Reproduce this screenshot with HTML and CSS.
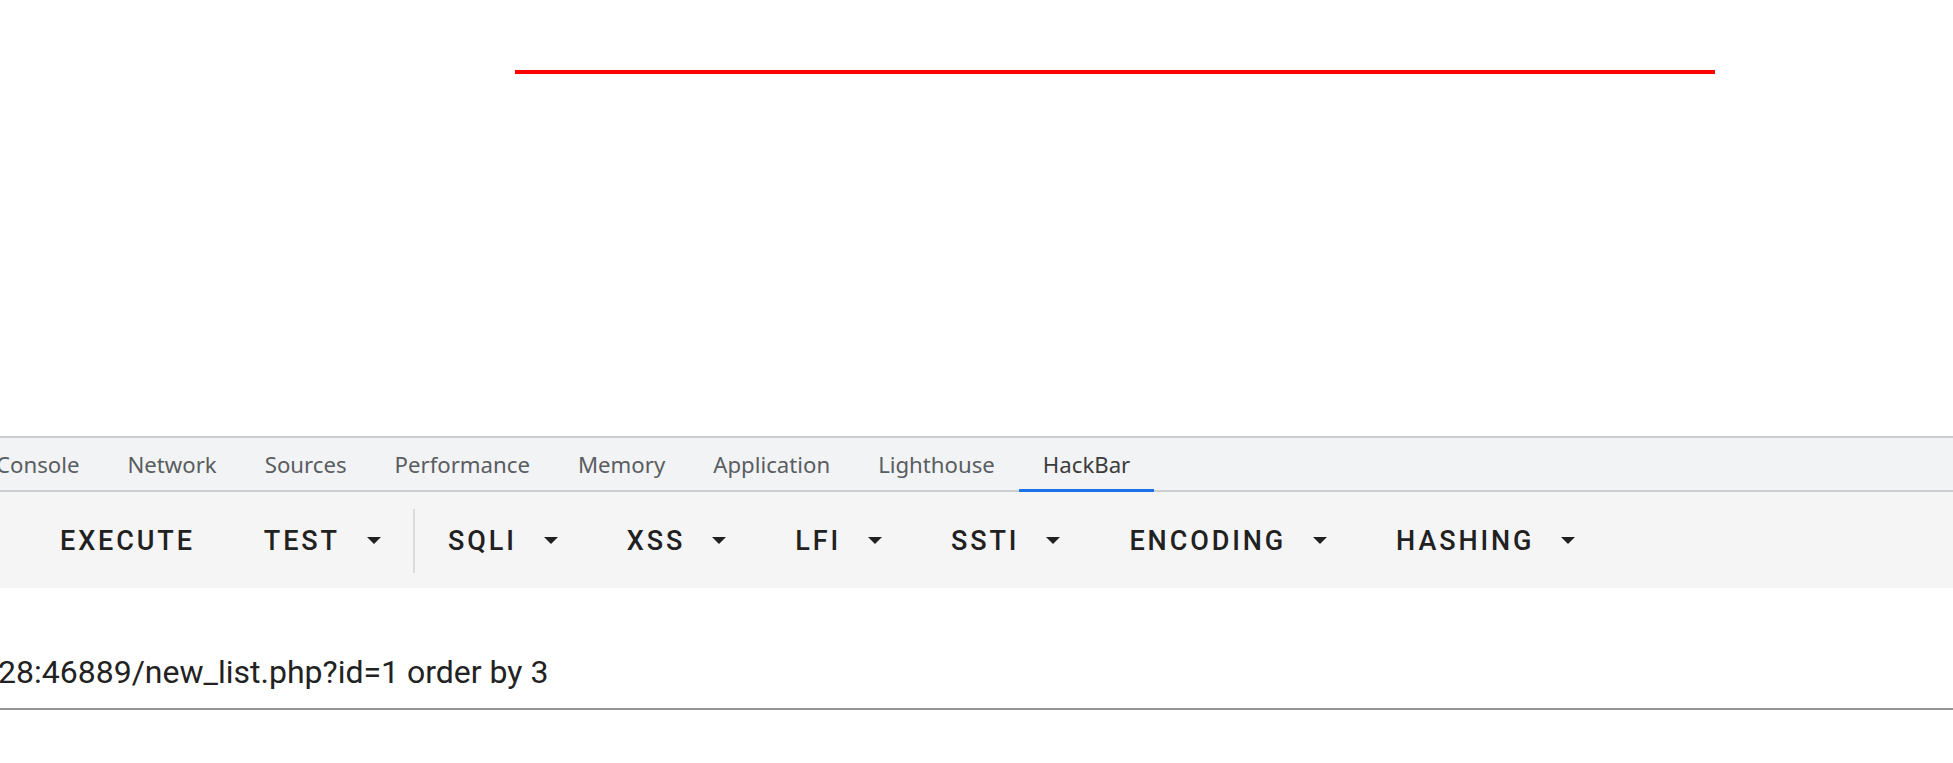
FILE: index.html
```html
<!DOCTYPE html>
<html lang="en">
<head>
<meta charset="utf-8">
<title>HackBar</title>
<link rel="stylesheet" href="styles.css">
</head>
<body>
<div class="page">
  <div class="redline"></div>
</div>
<div class="devtools">
  <div class="tabbar">
    <div class="tab first">Console</div>
    <div class="tab">Network</div>
    <div class="tab">Sources</div>
    <div class="tab">Performance</div>
    <div class="tab">Memory</div>
    <div class="tab">Application</div>
    <div class="tab">Lighthouse</div>
    <div class="tab active">HackBar</div>
  </div>
  <div class="toolbar">
    <div class="btn"><span class="label">Execute</span></div>
    <div class="btn"><span class="label">Test</span><svg class="caret" viewBox="0 0 14 8"><path d="M0 0H14L7 7Z"/></svg></div>
    <div class="divider"></div>
    <div class="btn"><span class="label">SQLI</span><svg class="caret" viewBox="0 0 14 8"><path d="M0 0H14L7 7Z"/></svg></div>
    <div class="btn"><span class="label">XSS</span><svg class="caret" viewBox="0 0 14 8"><path d="M0 0H14L7 7Z"/></svg></div>
    <div class="btn"><span class="label">LFI</span><svg class="caret" viewBox="0 0 14 8"><path d="M0 0H14L7 7Z"/></svg></div>
    <div class="btn"><span class="label">SSTI</span><svg class="caret" viewBox="0 0 14 8"><path d="M0 0H14L7 7Z"/></svg></div>
    <div class="btn"><span class="label">Encoding</span><svg class="caret" viewBox="0 0 14 8"><path d="M0 0H14L7 7Z"/></svg></div>
    <div class="btn"><span class="label">Hashing</span><svg class="caret" viewBox="0 0 14 8"><path d="M0 0H14L7 7Z"/></svg></div>
  </div>
  <div class="urlfield">
    <div class="urltext">28:46889/new_list.php?id=1 order by 3</div>
  </div>
</div>
</body>
</html>
```
FILE: styles.css
```css
html, body {
  margin: 0;
  padding: 0;
  background: #ffffff;
  overflow: hidden;
}
body {
  width: 1953px;
  height: 763px;
}
.page {
  height: 436px;
  padding-top: 70px;
  box-sizing: border-box;
}
.redline {
  margin-left: 515px;
  width: 1200px;
  height: 4px;
  background: #ff0000;
}
.devtools {
  display: flex;
  flex-direction: column;
}
.tabbar {
  display: flex;
  height: 52px;
  border-top: 2px solid #cbcdd1;
  border-bottom: 2px solid #cbcdd1;
  background: #f1f3f4;
  margin-left: -28px;
  font-family: "Noto Sans", "Open Sans", sans-serif;
  font-size: 22.2px;
}
.tab {
  position: relative;
  padding: 2px 24px 0;
  line-height: 50px;
  color: #5a5d61;
  white-space: nowrap;
}
.tab.active {
  color: #3c3c3c;
}
.tab.active::after {
  content: "";
  position: absolute;
  left: 0;
  right: 0;
  bottom: -2px;
  height: 3px;
  background: #1a73e8;
}
.toolbar {
  display: flex;
  align-items: center;
  height: 96px;
  background: #f5f5f5;
  padding-left: 25.5px;
  padding-top: 2px;
  box-sizing: border-box;
  font-family: Roboto, "Liberation Sans", sans-serif;
  font-weight: 500;
  font-size: 27px;
  letter-spacing: 2.9px;
  text-transform: uppercase;
  color: #212121;
}
.btn {
  display: flex;
  align-items: center;
  gap: 27px;
  padding: 0 34.5px;
  height: 72px;
}
.caret {
  width: 14px;
  height: 8px;
  fill: #212121;
}
.divider {
  width: 2px;
  height: 64px;
  margin: 0 -1.5px 0 -2.5px;
  background: #dcdcdc;
}
.urlfield {
  margin-top: 64px;
  padding-bottom: 16px;
  border-bottom: 2px solid #949494;
  font-family: Roboto, "Liberation Sans", sans-serif;
  font-size: 32px;
  line-height: 40px;
  color: #222222;
}
.urltext {
  white-space: nowrap;
  margin-left: -2px;
}
```
